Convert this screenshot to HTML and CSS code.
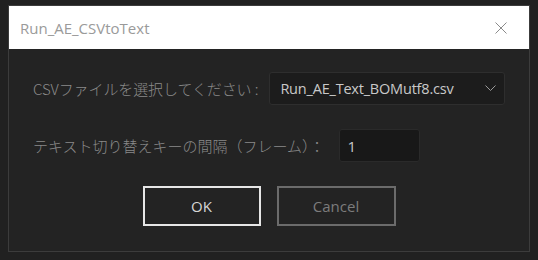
FILE: index.html
```html
<!DOCTYPE html>
<html>
<head>
<meta charset="utf-8">
<link rel="stylesheet" href="styles.css">
</head>
<body>
<div class="window">
  <div class="titlebar">
    <span class="title">Run_AE_CSVtoText</span>
    <svg class="close" width="12" height="12" viewBox="0 0 12 12"><path d="M0.5 0.5L11.5 11.5M11.5 0.5L0.5 11.5" stroke="#8a8a8a" stroke-width="1" fill="none"/></svg>
  </div>
  <div class="content">
    <div class="row first">
      <span class="label">CSVファイルを選択してください :</span>
      <div class="select">
        <span>Run_AE_Text_BOMutf8.csv</span>
        <svg width="11" height="6" viewBox="0 0 11 6"><path d="M0.5 0.5L5.5 5.5L10.5 0.5" stroke="#9a9a9a" stroke-width="1" fill="none"/></svg>
      </div>
    </div>
    <div class="row">
      <span class="label">テキスト切り替えキーの間隔（フレーム）：</span>
      <div class="input">1</div>
    </div>
    <div class="buttons">
      <div class="btn ok">OK</div>
      <div class="btn cancel">Cancel</div>
    </div>
  </div>
</div>
</body>
</html>
```
FILE: styles.css
```css
html, body {
  margin: 0;
  padding: 0;
  background: #212121;
  width: 538px;
  height: 260px;
  overflow: hidden;
  font-family: "Open Sans", "Noto Sans CJK JP", sans-serif;
}
.window {
  margin: 5px 0 0 8px;
  width: 520px;
  height: 245px;
  border: 1px solid #3c3c3c;
  background: #232323;
  display: flex;
  flex-direction: column;
}
.titlebar {
  height: 43px;
  background: #ffffff;
  display: flex;
  align-items: center;
  justify-content: space-between;
  padding: 0 22px 0 11px;
}
.title {
  font-size: 15px;
  color: #9a9a9a;
}
.close {
  display: block;
}
.content {
  flex: 1;
  padding: 23px 24px 0 24px;
  display: flex;
  flex-direction: column;
}
.row {
  display: flex;
  align-items: center;
  gap: 14px;
  margin-bottom: 24px;
}
.row.first {
  gap: 11px;
}
.label {
  font-size: 15px;
  color: #8a8a8a;
  font-family: "Noto Sans CJK JP", sans-serif;
  font-weight: 300;
  white-space: nowrap;
}
.first .label {
  letter-spacing: -0.1px;
}
.select {
  flex: 1;
  height: 31px;
  border: 1px solid #2e2e2e;
  border-radius: 3px;
  background: #1c1c1c;
  display: flex;
  align-items: center;
  justify-content: space-between;
  padding: 0 8px 0 10px;
  font-size: 14.5px;
  color: #c9c9c9;
}
.select span {
  letter-spacing: -0.2px;
}
.select svg {
  margin-top: -2px;
}
.input {
  width: 71px;
  height: 31px;
  border: 1px solid #2a2a2a;
  border-radius: 3px;
  background: #181818;
  display: flex;
  align-items: center;
  padding-left: 8px;
  font-size: 15px;
  color: #c9c9c9;
}
.buttons {
  display: flex;
  justify-content: center;
  gap: 16px;
}
.btn {
  width: 114px;
  height: 36px;
  display: flex;
  align-items: center;
  justify-content: center;
  font-size: 15px;
  background: #232323;
}
.ok {
  border: 2px solid #e6e6e6;
  color: #d6d6d6;
}
.cancel {
  border: 2px solid #6b6b6b;
  color: #7c7c7c;
  width: 115px;
}
```
